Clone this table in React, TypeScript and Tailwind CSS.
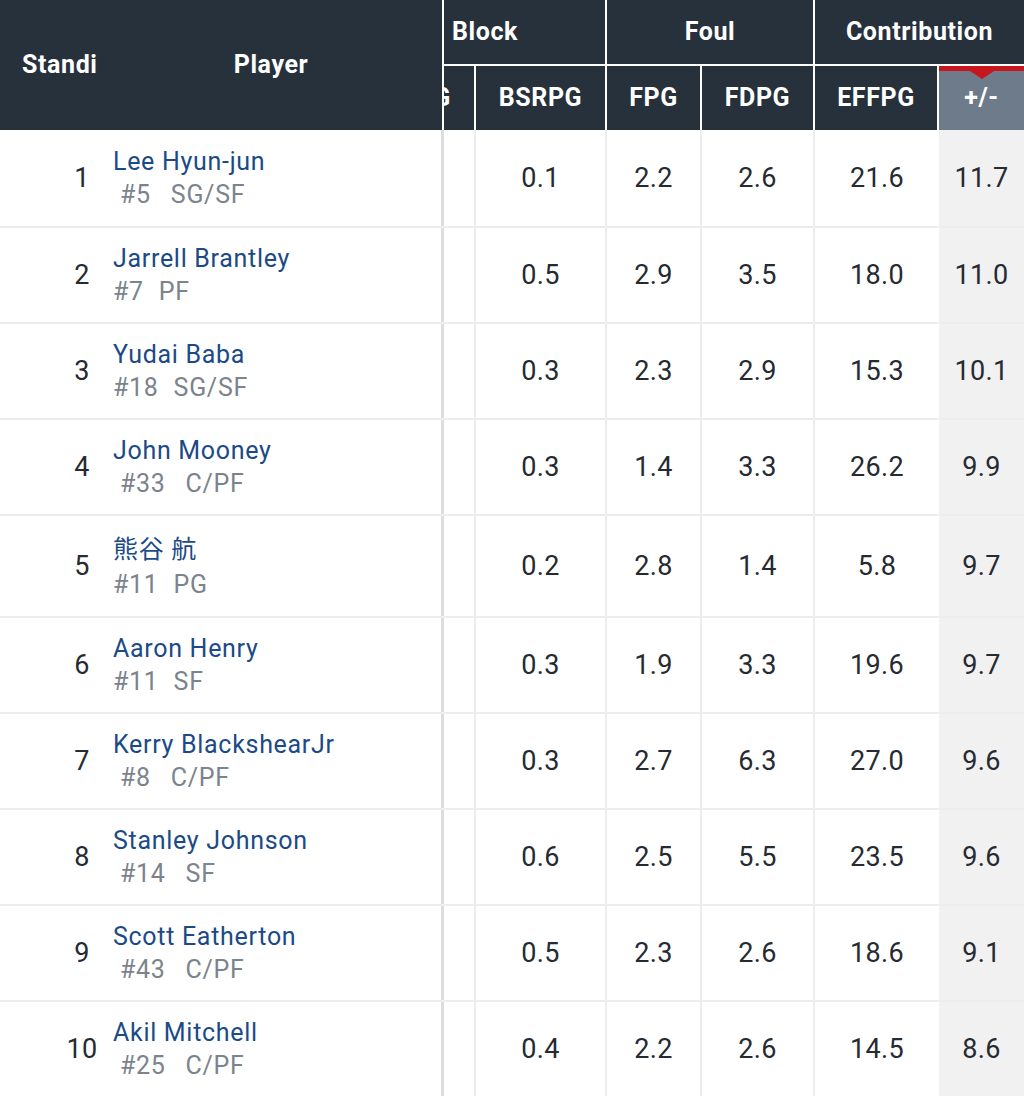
import React from "react";

type Row = {
  rank: number;
  name: string;
  num: string;
  pos: string;
  lead: boolean;
  v: [string, string, string, string, string];
};

const rows: Row[] = [
  { rank: 1, name: "Lee Hyun-jun", num: "#5", pos: "SG/SF", lead: true, v: ["0.1", "2.2", "2.6", "21.6", "11.7"] },
  { rank: 2, name: "Jarrell Brantley", num: "#7", pos: "PF", lead: false, v: ["0.5", "2.9", "3.5", "18.0", "11.0"] },
  { rank: 3, name: "Yudai Baba", num: "#18", pos: "SG/SF", lead: false, v: ["0.3", "2.3", "2.9", "15.3", "10.1"] },
  { rank: 4, name: "John Mooney", num: "#33", pos: "C/PF", lead: true, v: ["0.3", "1.4", "3.3", "26.2", "9.9"] },
  { rank: 5, name: "熊谷 航", num: "#11", pos: "PG", lead: false, v: ["0.2", "2.8", "1.4", "5.8", "9.7"] },
  { rank: 6, name: "Aaron Henry", num: "#11", pos: "SF", lead: false, v: ["0.3", "1.9", "3.3", "19.6", "9.7"] },
  { rank: 7, name: "Kerry BlackshearJr", num: "#8", pos: "C/PF", lead: true, v: ["0.3", "2.7", "6.3", "27.0", "9.6"] },
  { rank: 8, name: "Stanley Johnson", num: "#14", pos: "SF", lead: true, v: ["0.6", "2.5", "5.5", "23.5", "9.6"] },
  { rank: 9, name: "Scott Eatherton", num: "#43", pos: "C/PF", lead: true, v: ["0.5", "2.3", "2.6", "18.6", "9.1"] },
  { rank: 10, name: "Akil Mitchell", num: "#25", pos: "C/PF", lead: true, v: ["0.4", "2.2", "2.6", "14.5", "8.6"] },
];

const cols = "grid grid-cols-[100px_344px_32px_131px_95px_113px_124px_85px]";

function rowHeight(rank: number) {
  if (rank === 1) return "h-[98px]";
  if (rank === 5) return "h-[102px]";
  return "h-[96px]";
}

export default function App() {
  return (
    <div
      className="w-[1024px] h-[1096px] overflow-hidden bg-white"
      style={{ fontFamily: "Roboto, 'Noto Sans CJK JP', 'Noto Sans', sans-serif" }}
    >
      {/* Header */}
      <div className={`${cols} grid-rows-[66px_64px] bg-[#27313c] text-white font-bold text-[25px] tracking-[0.6px]`}>
        <div className="row-span-2 flex items-center pl-[22px] overflow-hidden whitespace-nowrap">Standi</div>
        <div className="row-span-2 flex items-center justify-center border-r-2 border-white">Player</div>
        <div className="col-span-2 flex items-center pl-[8px] border-b-2 border-r-2 border-white">Block</div>
        <div className="col-span-2 flex items-center justify-center border-b-2 border-r-2 border-white">Foul</div>
        <div className="col-span-2 flex items-center justify-center border-b-2 border-white">Contribution</div>
        <div className="flex items-center justify-end pr-[23px] overflow-hidden whitespace-nowrap border-r-2 border-white">
          BPG
        </div>
        <div className="flex items-center justify-center border-r-2 border-white">BSRPG</div>
        <div className="flex items-center justify-center border-r-2 border-white">FPG</div>
        <div className="flex items-center justify-center border-r-2 border-white">FDPG</div>
        <div className="flex items-center justify-center border-r-2 border-white">EFFPG</div>
        <div className="relative flex items-center justify-center bg-[#6e7b8b]">
          <div className="absolute left-0 right-0 top-0 h-[5px] bg-[#c8161e]" />
          <div className="absolute left-1/2 top-[5px] -translate-x-1/2 w-0 h-0 border-l-[12px] border-r-[12px] border-t-[8px] border-l-transparent border-r-transparent border-t-[#c8161e]" />
          <span>+/-</span>
        </div>
      </div>

      {/* Body */}
      {rows.map((r) => (
        <div
          key={r.rank}
          className={`${cols} ${rowHeight(r.rank)} border-b-2 border-[#ededed] text-[27px] tracking-[0.4px] text-[#262a31]`}
        >
          <div className="flex items-center justify-center pl-[64px]">{r.rank}</div>
          <div className="flex flex-col justify-center pl-[13px] border-r-[3px] border-[#dddddd] text-[25px] tracking-[0.7px] whitespace-nowrap">
            <div className={`${r.rank === 5 ? "leading-[37px]" : "leading-[33px]"} text-[#1b4a86]`}>{r.name}</div>
            <div className="leading-[33px] text-[#7b838d] flex">
              <span className={r.lead ? "ml-[7px]" : ""}>{r.num}</span>
              <span className={r.lead ? "ml-[20px]" : "ml-[15px]"}>{r.pos}</span>
            </div>
          </div>
          <div className="border-r-2 border-[#ececec]" />
          <div className="flex items-center justify-center border-r-2 border-[#ececec]">{r.v[0]}</div>
          <div className="flex items-center justify-center border-r-2 border-[#ececec]">{r.v[1]}</div>
          <div className="flex items-center justify-center border-r-2 border-[#ececec]">{r.v[2]}</div>
          <div className="flex items-center justify-center">{r.v[3]}</div>
          <div className="flex items-center justify-center bg-[#f1f1f1]">{r.v[4]}</div>
        </div>
      ))}
    </div>
  );
}
